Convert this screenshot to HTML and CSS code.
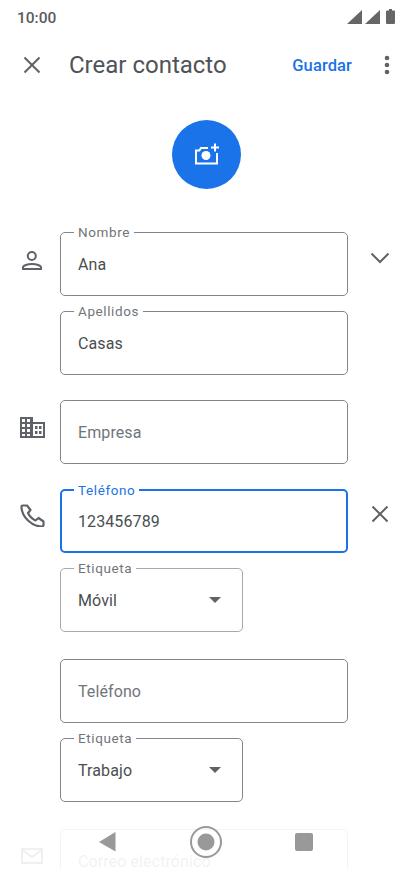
FILE: index.html
```html
<!DOCTYPE html>
<html lang="es">
<head>
<meta charset="utf-8">
<title>Crear contacto</title>
<link rel="stylesheet" href="styles.css">
</head>
<body>
<div class="screen">
  <header class="status">
    <span class="time">10:00</span>
    <span class="status-icons">
      <svg width="15" height="14" viewBox="0 0 15 14"><path d="M0 14 15 0v14z" fill="#666"/></svg>
      <svg class="signal-two" width="15" height="14" viewBox="0 0 15 14"><path d="M0 14 15 0v14z" fill="#666"/></svg>
      <svg class="battery" width="9" height="15" viewBox="0 0 9 15"><path d="M3 0h3v1.500h2a1 1 0 0 1 1 1V14a1 1 0 0 1-1 1H1a1 1 0 0 1-1-1V2.500a1 1 0 0 1 1-1h2z" fill="#666"/></svg>
    </span>
  </header>
  <div class="toolbar">
    <svg class="close" width="24" height="24" viewBox="0 0 24 24"><path d="M4.500 4.500l15 15M19.500 4.500l-15 15" stroke="#5f6368" stroke-width="2" fill="none"/></svg>
    <h1 class="title">Crear contacto</h1>
    <span class="save">Guardar</span>
    <svg class="more" width="6" height="20" viewBox="0 0 6 20"><circle cx="3" cy="3" r="2.300" fill="#5f6368"/><circle cx="3" cy="10" r="2.300" fill="#5f6368"/><circle cx="3" cy="17" r="2.300" fill="#5f6368"/></svg>
  </div>
  <div class="photo-wrap">
    <div class="photo">
      <svg width="26" height="24" viewBox="0 0 26 24"><path d="M15 5H8L6.300 7.500H3V20.500H24V10" fill="none" stroke="#fff" stroke-width="2"/><circle cx="13" cy="12.500" r="4.500" fill="#fff"/><path d="M22 .5v8M18 4.500h8" stroke="#fff" stroke-width="2" fill="none"/></svg>
    </div>
  </div>

  <div class="row first">
    <span class="lead"><svg width="24" height="24" viewBox="0 0 24 24"><circle cx="11.800" cy="10" r="4" fill="none" stroke="#5f6368" stroke-width="2"/><path d="M3 23v-1.500C3 19.500 7.500 18 12 18s9 1.500 9 3.500V23z" fill="none" stroke="#5f6368" stroke-width="2"/></svg></span>
    <div class="field"><span class="label">Nombre</span><span class="value">Ana</span></div>
    <span class="trail"><svg width="24" height="24" viewBox="0 0 24 24"><path d="M3.500 8.500l8.500 8.500 8.500-8.500" fill="none" stroke="#5f6368" stroke-width="2"/></svg></span>
  </div>
  <div class="row tight">
    <span class="lead"></span>
    <div class="field"><span class="label">Apellidos</span><span class="value">Casas</span></div>
    <span class="trail"></span>
  </div>
  <div class="row group-mid">
    <span class="lead"><svg width="25" height="24" viewBox="0 0 25 24"><path fill-rule="evenodd" d="M0 3h13v5h12v16H0zM2 5v3h3V5zM7 5v3h3V5zM2 10v3h3v-3zM7 10v3h3v-3zM2 15v3h3v-3zM7 15v3h3v-3zM2 20v2h3v-2zM7 20v2h3v-2zM13 10v12h10V10z" fill="#5f6368"/><path d="M15 12h2.500v3H15zM19 12h2.500v3H19zM15 17h2.500v3H15zM19 17h2.500v3H19z" fill="#5f6368"/></svg></span>
    <div class="field"><span class="placeholder">Empresa</span></div>
    <span class="trail"></span>
  </div>
  <div class="row group">
    <span class="lead"><svg width="25" height="24" viewBox="0 0 25 24"><path d="M7 2.500 10.500 7 8 10c1.500 3.200 4.300 6 7.500 7.500l3-2.500 5 3.500v3.300c0 1-.8 1.700-1.700 1.700C11.500 23.500 1.500 13.500 1.500 3.700c0-.7.500-1.200 1.200-1.200z" fill="none" stroke="#5f6368" stroke-width="2.200" stroke-linejoin="round"/></svg></span>
    <div class="field focused"><span class="label">Teléfono</span><span class="value">123456789</span></div>
    <span class="trail"><svg width="24" height="24" viewBox="0 0 24 24"><path d="M4.500 4.500l15 15M19.500 4.500l-15 15" stroke="#5f6368" stroke-width="2" fill="none"/></svg></span>
  </div>
  <div class="row tight">
    <span class="lead"></span>
    <div class="field select light"><span class="label">Etiqueta</span><span class="value">Móvil</span><span class="caret"></span></div>
  </div>
  <div class="row group-wide">
    <span class="lead"></span>
    <div class="field"><span class="placeholder">Teléfono</span></div>
    <span class="trail"></span>
  </div>
  <div class="row tight">
    <span class="lead"></span>
    <div class="field select"><span class="label">Etiqueta</span><span class="value">Trabajo</span><span class="caret"></span></div>
  </div>
  <div class="row group-wide">
    <span class="lead"><svg width="24" height="24" viewBox="0 0 24 24"><path d="M2 6h20v14H2zM2.500 7 12 14 21.500 7" fill="none" stroke="#5f6368" stroke-width="2"/></svg></span>
    <div class="field"><span class="placeholder">Correo electrónico</span></div>
    <span class="trail"></span>
  </div>

  <nav class="navbar">
    <svg width="18" height="20" viewBox="0 0 18 20"><path d="M17.500 0v19.500L1 10z" fill="#999"/></svg>
    <svg class="home" width="32" height="32" viewBox="0 0 32 32"><circle cx="16" cy="16" r="15" fill="none" stroke="#999" stroke-width="2"/><circle cx="16" cy="16" r="8.500" fill="#999"/></svg>
    <span class="square"></span>
  </nav>
</div>
</body>
</html>
```

FILE: styles.css
```css
* { box-sizing: border-box; }
html, body { margin: 0; padding: 0; background: #fff; }
.screen {
  position: relative;
  width: 412px;
  height: 869px;
  overflow: hidden;
  font-family: Roboto, "Liberation Sans", sans-serif;
  color: #5f6368;
}
.status {
  height: 36px;
  display: flex;
  align-items: center;
  justify-content: space-between;
  padding: 0 17px;
}
.time { font-size: 15.500px; font-weight: 500; color: #5c5c5c; }
.status-icons { display: flex; align-items: center; gap: 3px; margin-top: -3px; }
.battery { margin-left: 3px; }
.toolbar {
  height: 58px;
  display: flex;
  align-items: center;
  padding-left: 20px;
}
.close { flex: none; }
.title {
  margin: 0 0 0 25px;
  font-size: 24px;
  font-weight: 400;
  color: #4f5357;
  flex: 1;
}
.save { font-size: 16.500px; font-weight: 500; letter-spacing: .1px; color: #1a73e8; }
.more { margin: 0 22.500px 0 31.500px; flex: none; }
.photo-wrap { display: flex; justify-content: center; padding-top: 26px; }
.photo {
  width: 69px;
  height: 69px;
  border-radius: 50%;
  background: #1a73e8;
  display: flex;
  align-items: center;
  justify-content: center;
}
.row { display: flex; align-items: flex-start; }
.first { margin-top: 43px; }
.tight { margin-top: 15.500px; }
.group-mid { margin-top: 25.500px; }
.group { margin-top: 25.500px; }
.group-wide { margin-top: 27.500px; }
.lead { width: 60px; flex: none; padding: 14px 0 0 20px; }
.trail { width: 64px; flex: none; padding: 13px 0 0 20px; }
.lead svg, .trail svg { display: block; }
.field {
  position: relative;
  width: 288px;
  height: 63.500px;
  flex: none;
  border: 1px solid #80868b;
  border-radius: 5px;
  display: flex;
  align-items: center;
  padding: 2px 17px 0;
  font-size: 16px;
  letter-spacing: .1px;
}
.select { width: 183px; }
.light { border-color: #a6a9ad; }
.focused { border: 2px solid #1a73e8; padding: 2px 16px 0; }
.label {
  position: absolute;
  left: 13px;
  top: -9px;
  padding: 0 4px;
  background: #fff;
  font-size: 13.500px;
  letter-spacing: .6px;
  line-height: 16px;
  color: #70757a;
}
.focused .label { left: 12px; top: -9px; color: #1a73e8; }
.value { color: #4a4e52; }
.placeholder { color: #70757a; }
.caret {
  position: absolute;
  right: 21px;
  top: 28px;
  border-left: 6px solid transparent;
  border-right: 6px solid transparent;
  border-top: 6px solid #5f6368;
}
.navbar {
  position: absolute;
  left: 0;
  right: 0;
  bottom: 0;
  height: 44px;
  background: rgba(255,255,255,.9);
  display: flex;
  align-items: flex-start;
  padding: 7px 0 0 98px;
}
.home { margin: -6px 0 0 74px; }
.square {
  width: 17.500px;
  height: 17.500px;
  margin: 1px 0 0 73px;
  border-radius: 2px;
  background: #999;
}
```
